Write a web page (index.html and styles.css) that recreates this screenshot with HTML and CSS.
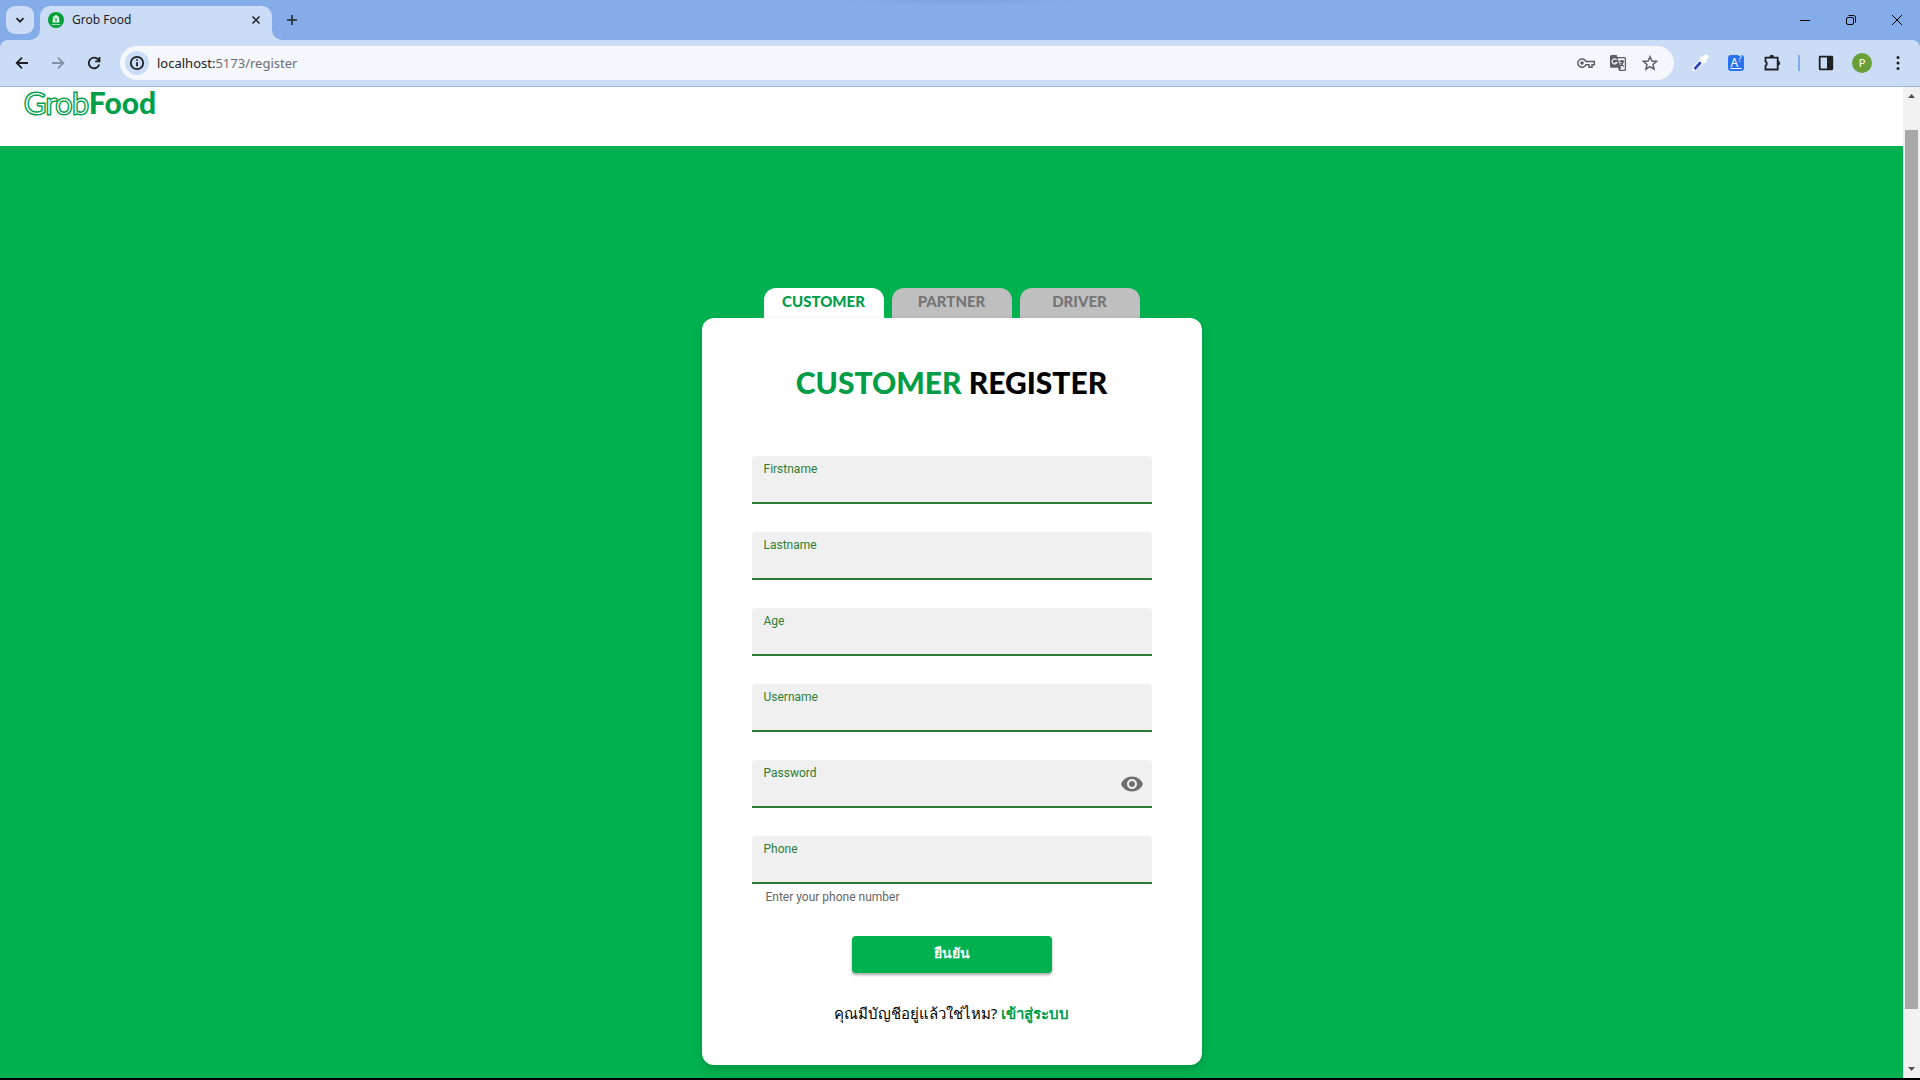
FILE: index.html
```html
<!DOCTYPE html>
<html lang="en">
<head>
<meta charset="utf-8">
<title>Grob Food</title>
<meta name="viewport" content="width=device-width, initial-scale=1">
<link rel="stylesheet" href="styles.css">
</head>
<body>
<div class="window">
  <header class="tabstrip">
    <button class="tab-search" aria-label="Search tabs"><svg class="icon" viewBox="0 0 20 20"><path class="line" d="M6.500 8.200l3.500 3.500 3.500-3.500"/></svg></button>
    <div class="tab">
      <svg class="favicon" viewBox="0 0 16 16"><circle cx="8" cy="8" r="8" fill="#00a038"/><path d="M5 4.500h1.500a1.500 1.500 0 0 1 3 0H11l.5 6h-7z" fill="#e9fbef"/><path d="M6.300 6l1.700 1.500L9.700 6M7 8.800h2" fill="none" stroke="#00a038"/><path d="M3.500 12.500h9" stroke="#a5dfb7"/></svg>
      <span class="tab-title">Grob Food</span>
      <button class="tab-close" aria-label="Close tab"><svg class="icon" viewBox="0 0 20 20"><path class="thin" d="M6.500 6.500l7 7m0-7l-7 7"/></svg></button>
      <svg class="tab-curve" viewBox="0 0 10 10"><path d="M0 0v10h10A10 10 0 0 1 0 0z"/></svg>
      <svg class="tab-curve tab-curve-left" viewBox="0 0 10 10"><path d="M10 0v10H0A10 10 0 0 0 10 0z"/></svg>
    </div>
    <button class="new-tab" aria-label="New tab"><svg class="icon" viewBox="0 0 20 20"><path class="thin" d="M10 5v10M5 10h10"/></svg></button>
    <div class="window-controls">
      <button aria-label="Minimize"><svg class="icon" viewBox="0 0 20 20"><path class="hair" d="M5 10.500h10"/></svg></button>
      <button aria-label="Restore"><svg class="icon" viewBox="0 0 20 20"><rect class="hair" x="5.500" y="7.500" width="7" height="7" rx="1.500"/><path class="hair" d="M7.500 5.500h5a2 2 0 0 1 2 2v5"/></svg></button>
      <button aria-label="Close"><svg class="icon" viewBox="0 0 20 20"><path class="hair" d="M5 5l10 10M15 5L5 15"/></svg></button>
    </div>
  </header>

  <nav class="toolbar" aria-label="Browser">
    <button aria-label="Back"><svg class="icon" viewBox="0 0 20 20"><path class="line" d="M16 10H5M10 4.700L4.700 10l5.300 5.300"/></svg></button>
    <button class="muted" aria-label="Forward"><svg class="icon" viewBox="0 0 20 20"><path class="line" d="M4 10h11M10 4.700l5.300 5.300-5.300 5.300"/></svg></button>
    <button aria-label="Reload"><svg class="icon" viewBox="0 0 20 20"><path class="line" d="M15.200 11.500A5.300 5.300 0 1 1 14 6.400l1.200 1.400M15.500 4v4.300h-4.300"/></svg></button>
    <div class="omnibox">
      <button class="site-info" aria-label="Site information"><svg class="icon" viewBox="0 0 20 20"><circle class="line" cx="10" cy="10" r="6.200"/><path class="line" d="M10 9.300v4M10 6.300v1.500"/></svg></button>
      <span class="url"><span class="url-host">localhost:</span>5173/register</span>
      <div class="omnibox-actions">
        <button aria-label="Passwords"><svg class="icon" viewBox="0 0 20 20"><path class="thin" d="M9.900 8.500A4.200 4.200 0 1 0 9.900 11.700H13v2.500h3v-2.500h2.300V8.500z"/><circle cx="6" cy="10" r="1.800"/></svg></button>
        <button aria-label="Translate"><svg class="icon" viewBox="0 0 20 20"><path d="M3.500 2h5.200l.6 2h7.200A1.500 1.500 0 0 1 18 5.500v11a1.500 1.500 0 0 1-1.500 1.500H11l-1-3.300H3.500A1.500 1.500 0 0 1 2 13.200V3.500A1.500 1.500 0 0 1 3.500 2z"/><path class="paper" d="M9.700 5.200h6.300q.8 0 .8.800v10q0 .8-.8.800h-4.300l2-2.300h-1z"/><path class="paper-line" d="M8.700 7a2.500 2.500 0 1 0 .2 2.500H6.800"/><path class="thin" d="M11.500 8.200h4.800M13.800 7v1.200M15.300 8.500c-.5 2-1.800 3.500-3.300 4.500M12.500 9.500c.6 1.700 1.800 3 3.300 4"/></svg></button>
        <button aria-label="Bookmark this page"><svg class="icon" viewBox="0 0 20 20"><path class="thin" d="M10 3.700l1.900 4.300 4.700.4-3.600 3.100 1.100 4.600L10 13.600l-4.100 2.500L7 11.500 3.400 8.400 8.100 8z"/></svg></button>
      </div>
    </div>
    <button aria-label="Color picker"><svg class="icon" viewBox="0 0 20 20"><path d="M2.500 17.500l1.300-4L11 6.300l3 3-7.200 7.200z" fill="#fff" stroke="#fff"/><path d="M10 4.500l1.200-1 1.400 1.300 1.900-2.300a2 2 0 0 1 3 3l-2.300 2 1.200 1.200-1.200 1.200z" fill="#fff" stroke="#fff"/><path d="M5.300 15.200l4.700-5.200" stroke="#2d46b9" stroke-width="2.800" stroke-linecap="round"/></svg></button>
    <button class="ext" aria-label="Dictionary">A<sup>?</sup></button>
    <button aria-label="Extensions"><svg class="icon" viewBox="0 0 20 20"><path class="line" d="M3.500 4.700h12.200v11.800H3.500v-3.900a2.100 2.100 0 0 0 0-3.900z"/><path d="M7.500 4a2.200 2.200 0 0 1 4.400 0zM16 8a2.200 2.200 0 0 1 0 4.400z"/></svg></button>
    <span class="divider"></span>
    <button aria-label="Side panel"><svg class="icon" viewBox="0 0 20 20"><rect class="line" x="3.700" y="3.700" width="12.600" height="12.600" rx=".5"/><path d="M11 3.500h5.500v13H11z"/></svg></button>
    <button class="avatar" aria-label="Profile">P</button>
    <button aria-label="Menu"><svg class="icon" viewBox="0 0 20 20"><circle cx="10" cy="4.500" r="1.500"/><circle cx="10" cy="10" r="1.500"/><circle cx="10" cy="15.500" r="1.500"/></svg></button>
  </nav>

  <div class="viewport">
    <div class="page">
      <header class="site-header"><a class="logo" href="#"><span class="logo-outline">Grob</span><span class="logo-solid">Food</span></a></header>
      <main class="stage">
        <div class="roles">
          <button class="role role-active">CUSTOMER</button>
          <button class="role">PARTNER</button>
          <button class="role">DRIVER</button>
        </div>
        <form class="card">
          <h1 class="title"><span class="accent">CUSTOMER</span> REGISTER</h1>
          <div class="fields">
            <div class="field"><label for="firstname">Firstname</label><input id="firstname" type="text"></div>
            <div class="field"><label for="lastname">Lastname</label><input id="lastname" type="text"></div>
            <div class="field"><label for="age">Age</label><input id="age" type="text"></div>
            <div class="field"><label for="username">Username</label><input id="username" type="text"></div>
            <div class="field"><label for="password">Password</label><input id="password" type="password">
              <button class="reveal" type="button" aria-label="Show password"><svg viewBox="0 0 24 24"><path d="M12 4.500C7 4.500 2.730 7.610 1 12c1.730 4.390 6 7.500 11 7.500s9.270-3.110 11-7.500c-1.730-4.390-6-7.500-11-7.500zM12 17c-2.760 0-5-2.240-5-5s2.240-5 5-5 5 2.240 5 5-2.240 5-5 5zm0-8c-1.660 0-3 1.340-3 3s1.340 3 3 3 3-1.340 3-3-1.340-3-3-3z"/></svg></button>
            </div>
            <div class="field"><label for="phone">Phone</label><input id="phone" type="tel" aria-describedby="phone-help"></div>
          </div>
          <p class="help" id="phone-help">Enter your phone number</p>
          <button class="submit" type="submit" lang="th">ยืนยัน</button>
          <p class="signin" lang="th">คุณมีบัญชีอยู่แล้วใช่ไหม? <a href="#">เข้าสู่ระบบ</a></p>
        </form>
      </main>
    </div>
    <div class="scrollbar" aria-hidden="true">
      <svg viewBox="0 0 17 17"><path d="M5 11h7L8.500 7z"/></svg>
      <div class="track"><div class="thumb"></div></div>
      <svg viewBox="0 0 17 17"><path d="M5 6h7l-3.500 4z"/></svg>
    </div>
  </div>
</div>
</body>
</html>
```
FILE: styles.css
```css
* {
  box-sizing: border-box;
}

body {
  margin: 0;
  font-family: "Noto Sans", "Open Sans", sans-serif;
  color: #000;
}

button {
  padding: 0;
  border: 0;
  background: none;
  color: inherit;
  font: inherit;
}

.window {
  display: flex;
  flex-direction: column;
  height: 100vh;
  background: #84ace9;
  border-bottom: 2px solid #000;
  overflow: hidden;
}

/* Browser chrome */
.icon {
  display: block;
  width: 20px;
  height: 20px;
  fill: currentColor;
}

.line,
.thin,
.hair {
  fill: none;
  stroke: currentColor;
  stroke-width: 1.800;
}

.thin {
  stroke-width: 1.500;
}

.hair {
  stroke-width: 1;
}

.paper {
  fill: #f4f7fc;
}

.paper-line {
  fill: none;
  stroke: #f4f7fc;
  stroke-width: 1.200;
}

.tabstrip {
  display: flex;
  align-items: center;
  gap: 6px;
  flex: none;
  height: 40px;
  padding-left: 6px;
  background: radial-gradient(ellipse 120px 6px at 50% 0, #7ba2de, #84ace9);
  color: #1f2023;
}

.tab-search,
.new-tab {
  display: grid;
  place-items: center;
  width: 28px;
  height: 28px;
}

.tab-search {
  border-radius: 9px;
  background: #cbdcf6;
}

.tab {
  position: relative;
  display: flex;
  align-items: center;
  gap: 8px;
  align-self: flex-end;
  width: 232px;
  height: 34px;
  padding: 0 6px 6px 8px;
  border-radius: 10px 10px 0 0;
  background: #cbdcf6;
}

.tab-curve {
  position: absolute;
  bottom: 0;
  left: 100%;
  width: 10px;
  height: 10px;
  fill: #cbdcf6;
}

.tab-curve-left {
  left: -10px;
}

.favicon {
  width: 16px;
  height: 16px;
}

.tab-title {
  flex: 1;
  font-size: 12px;
  line-height: 18px;
}

.window-controls {
  display: flex;
  margin-left: auto;
  color: #000;
}

.window-controls button {
  display: grid;
  place-items: center;
  width: 46px;
  height: 40px;
}

.toolbar {
  display: flex;
  align-items: center;
  gap: 16px;
  flex: none;
  height: 47px;
  padding: 0 12px;
  border-bottom: 1px solid #a6b4cf;
  border-radius: 8px 8px 0 0;
  background: #cbdcf6;
  color: #1f2023;
}

.muted {
  color: #8390a6;
}

.omnibox {
  display: flex;
  align-items: center;
  gap: 8px;
  flex: 1;
  height: 34px;
  padding: 0 14px 0 5px;
  border-radius: 17px;
  background: #f4f7fc;
}

.site-info {
  display: grid;
  place-items: center;
  width: 24px;
  height: 24px;
  border-radius: 50%;
  background: #cbdcf6;
}

.url {
  flex: 1;
  color: #6b6e73;
  font-size: 13px;
  line-height: 20px;
}

.url-host {
  color: #1f2023;
}

.omnibox-actions {
  display: flex;
  gap: 12px;
  color: #5b5e63;
}

.ext {
  width: 16px;
  height: 16px;
  margin: 0 2px;
  border-radius: 3px;
  background: #2b72f0;
  color: #fff;
  font-size: 12px;
  line-height: 16px;
  text-decoration: underline;
}

.ext sup {
  font-size: 8px;
  line-height: 0;
}

.divider {
  width: 2px;
  height: 16px;
  background: #84ace9;
}

.avatar {
  width: 20px;
  height: 20px;
  border-radius: 50%;
  background: #689f38;
  color: #fff;
  font-size: 11px;
  line-height: 20px;
}

/* Scroll area */
.viewport {
  display: flex;
  flex: 1;
  min-height: 0;
}

.scrollbar {
  display: flex;
  flex-direction: column;
  flex: none;
  width: 17px;
  background: #f1f1f1;
}

.scrollbar svg {
  width: 17px;
  height: 17px;
  fill: #505050;
}

.track {
  flex: 1;
  padding: 26px 2px 52px;
}

.thumb {
  height: 100%;
  background: #a8a8a8;
}

/* Page */
.page {
  display: flex;
  flex-direction: column;
  flex: 1;
  min-width: 0;
  background: #00b14f;
}

.site-header {
  flex: none;
  height: 59px;
  padding: 0 24px;
  background: #fff;
}

.logo {
  display: inline-flex;
  color: #00a04a;
  font-family: Lato, sans-serif;
  font-size: 30px;
  line-height: 30px;
  text-decoration: none;
}

.logo-outline {
  color: #fff;
  font-weight: 300;
  -webkit-text-stroke: 3px #00a04a;
  paint-order: stroke fill;
}

.logo-solid {
  font-weight: 900;
}

.stage {
  display: flex;
  flex-direction: column;
  align-items: center;
  padding-top: 142px;
}

.roles {
  display: flex;
  gap: 8px;
}

.role {
  width: 120px;
  height: 30px;
  padding-bottom: 4px;
  border-radius: 12px 12px 0 0;
  background: #bfbfbf;
  color: #757575;
  font-family: Lato, sans-serif;
  font-size: 15px;
  font-weight: 900;
  line-height: 24px;
}

.role-active {
  background: #fff;
  color: #009d47;
}

.card {
  display: flex;
  flex-direction: column;
  align-items: center;
  width: 500px;
  max-width: 100%;
  padding: 40px 50px;
  border-radius: 12px;
  background: #fff;
  box-shadow: 0 4px 8px rgba(0, 0, 0, 0.16);
}

.title {
  margin: 0 0 50px;
  font-family: Lato, sans-serif;
  font-size: 30px;
  font-weight: 900;
  line-height: 48px;
}

.accent {
  color: #009d47;
}

.fields {
  display: flex;
  flex-direction: column;
  gap: 28px;
  width: 100%;
}

.field {
  position: relative;
  height: 48px;
}

.field label {
  position: absolute;
  top: 4px;
  left: 12px;
  color: #2e7d32;
  font-family: Roboto, sans-serif;
  font-size: 12px;
  line-height: 18px;
}

.field input {
  display: block;
  width: 100%;
  height: 48px;
  padding: 20px 12px 4px;
  border: 0;
  border-bottom: 2px solid #2e7d32;
  border-radius: 4px 4px 0 0;
  outline: 0;
  background: #f0f0f0;
  font: inherit;
}

.reveal {
  position: absolute;
  top: 12px;
  right: 8px;
  width: 24px;
  height: 24px;
}

.reveal svg {
  display: block;
  fill: #6f6f6f;
}

.help {
  align-self: flex-start;
  margin: 4px 14px 30px;
  color: #666;
  font-family: Roboto, sans-serif;
  font-size: 12px;
  line-height: 18px;
}

.submit {
  width: 200px;
  height: 37px;
  padding-bottom: 4px;
  border-radius: 4px;
  background: #00b14f;
  box-shadow: 0 2px 3px rgba(0, 0, 0, 0.35);
  color: #fff;
  font-size: 14px;
  font-weight: 700;
}

.signin {
  margin: 28px 0 0;
  font-size: 15px;
  line-height: 24px;
}

.signin a {
  color: #009d47;
  font-weight: 700;
  text-decoration: none;
}
```
